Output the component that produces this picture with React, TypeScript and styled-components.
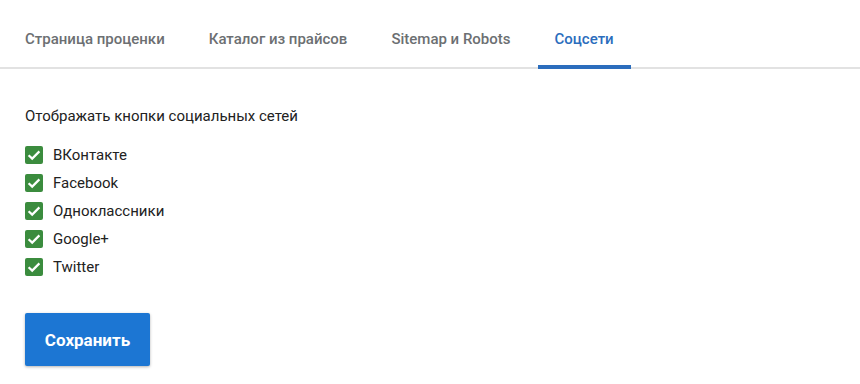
import React, { useState } from "react";
import styled, { createGlobalStyle } from "styled-components";

const Global = createGlobalStyle`
  html, body { margin: 0; padding: 0; background: #fff; }
  body { font-family: Roboto, "Noto Sans", Arial, sans-serif; }
`;

const Page = styled.div`
  width: 860px;
  height: 384px;
  background: #fff;
`;

const TabBar = styled.div`
  display: flex;
  gap: 10px;
  padding-left: 8px;
  border-bottom: 2px solid #e2e2e2;
  height: 67px;
  box-sizing: content-box;
`;

const Tab = styled.div<{ $active?: boolean }>`
  display: flex;
  align-items: center;
  padding: 0 17px;
  padding-top: 12px;
  margin-bottom: -2px;
  font-size: 15px;
  font-weight: 500;
  color: ${(p) => (p.$active ? "#2b6dbd" : "#6c6f72")};
  border-bottom: 4px solid ${(p) => (p.$active ? "#2b6dbd" : "transparent")};
  box-sizing: border-box;
  height: 69px;
  cursor: pointer;
`;

const Content = styled.div`
  padding: 38px 25px 0;
`;

const Heading = styled.div`
  font-size: 15px;
  color: #222;
  line-height: 18px;
  margin-bottom: 21px;
`;

const List = styled.div`
  display: flex;
  flex-direction: column;
  gap: 10px;
`;

const Row = styled.label`
  display: flex;
  align-items: center;
  gap: 10px;
  font-size: 15px;
  color: #222;
  height: 18px;
  cursor: pointer;
`;

const Box = styled.span<{ $on: boolean }>`
  width: 18px;
  height: 18px;
  border-radius: 2px;
  background: ${(p) => (p.$on ? "#3b8c3e" : "#fff")};
  border: ${(p) => (p.$on ? "none" : "2px solid #777")};
  box-sizing: border-box;
  display: flex;
  align-items: center;
  justify-content: center;
`;

const SaveButton = styled.button`
  margin-top: 37px;
  width: 125px;
  height: 53px;
  border: none;
  border-radius: 2px;
  background: #1c76d3;
  color: #fff;
  font-family: Roboto, Arial, sans-serif;
  font-size: 17px;
  font-weight: 700;
  box-shadow: 0 1px 3px rgba(0, 0, 0, 0.3);
  cursor: pointer;
`;

const tabs = ["Страница проценки", "Каталог из прайсов", "Sitemap и Robots", "Соцсети"];
const networks = ["ВКонтакте", "Facebook", "Одноклассники", "Google+", "Twitter"];

export default function App() {
  const [active, setActive] = useState(3);
  const [checked, setChecked] = useState<boolean[]>(networks.map(() => true));
  return (
    <Page>
      <Global />
      <TabBar>
        {tabs.map((t, i) => (
          <Tab key={t} $active={i === active} onClick={() => setActive(i)}>
            {t}
          </Tab>
        ))}
      </TabBar>
      <Content>
        <Heading>Отображать кнопки социальных сетей</Heading>
        <List>
          {networks.map((n, i) => (
            <Row
              key={n}
              onClick={() => setChecked((c) => c.map((v, j) => (j === i ? !v : v)))}
            >
              <Box $on={checked[i]}>
                {checked[i] && (
                  <svg width="18" height="18" viewBox="0 0 18 18">
                    <path d="M3.6 9.2 L7.2 12.6 L14.4 5.4" stroke="#fff" strokeWidth="2.2" fill="none" />
                  </svg>
                )}
              </Box>
              {n}
            </Row>
          ))}
        </List>
        <SaveButton>Сохранить</SaveButton>
      </Content>
    </Page>
  );
}
